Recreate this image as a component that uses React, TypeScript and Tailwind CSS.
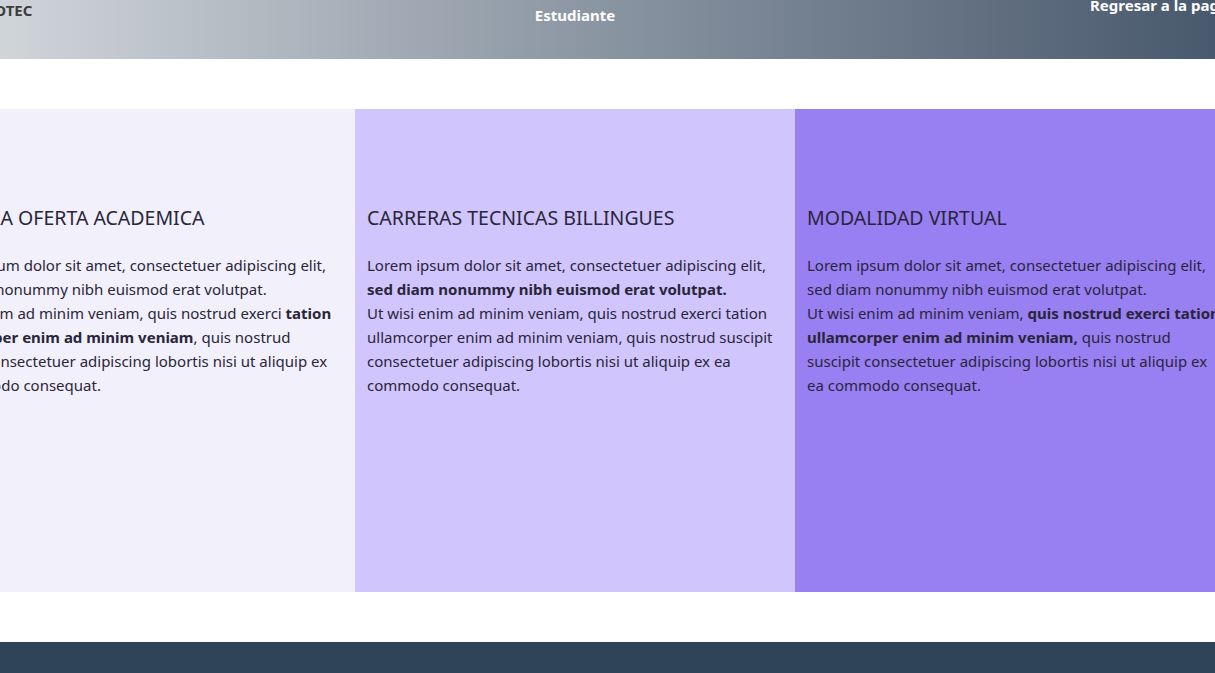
const PANELS = [
	{
		title: "NUESTRA OFERTA ACADEMICA",
		bg: "bg-[#f2f0fb]",
		body: (
			<>
				Lorem ipsum dolor sit amet, consectetuer adipiscing elit, sed diam nonummy nibh euismod erat volutpat.
				<br />
				Ut wisi enim ad minim veniam, quis nostrud exerci <b>tation ullamcorper enim ad minim veniam</b>, quis nostrud suscipit
				consectetuer adipiscing lobortis nisi ut aliquip ex ea commodo consequat.
			</>
		),
	},
	{
		title: "CARRERAS TECNICAS BILLINGUES",
		bg: "bg-[#d0c5fc]",
		body: (
			<>
				Lorem ipsum dolor sit amet, consectetuer adipiscing elit, <b>sed diam nonummy nibh euismod erat volutpat.</b>
				<br />
				Ut wisi enim ad minim veniam, quis nostrud exerci tation ullamcorper enim ad minim veniam, quis nostrud suscipit
				consectetuer adipiscing lobortis nisi ut aliquip ex ea commodo consequat.
			</>
		),
	},
	{
		title: "MODALIDAD VIRTUAL",
		bg: "bg-[#987ff2]",
		body: (
			<>
				Lorem ipsum dolor sit amet, consectetuer adipiscing elit, sed diam nonummy nibh euismod erat volutpat.
				<br />
				Ut wisi enim ad minim veniam, <b>quis nostrud exerci tation ullamcorper enim ad minim veniam,</b> quis nostrud
				suscipit consectetuer adipiscing lobortis nisi ut aliquip ex ea commodo consequat.
			</>
		),
	},
]

const Header = () => (
	<header className="grid h-[59px] grid-cols-3 items-start bg-gradient-to-r from-[#dadee1] to-[#47576b] text-[15px] font-bold">
		<p className="-mt-px pl-[53px] text-[#3d3d3d]">INFOTEC</p>
		<p className="pt-[4px] text-center text-white">Estudiante</p>
		<p className="-mt-[6px] whitespace-nowrap pl-[295px] text-white">Regresar a la pagina principal</p>
	</header>
)

const App = () => {
	return (
		<div className="w-full overflow-hidden bg-white" style={{fontFamily: '"Noto Sans", "Open Sans", sans-serif'}}>
			<div className="-ml-[85px] w-[1320px]">
				<Header />
				<section className="mt-[50px] grid h-[483px] grid-cols-3">
					{PANELS.map(panel => (
						<div key={panel.title} className={`${panel.bg} px-3 pt-[95px] text-[#29263a]`}>
							<h2 className="text-[19.5px] leading-7">{panel.title}</h2>
							<p className="mt-[21px] text-[15px] leading-6">{panel.body}</p>
						</div>
					))}
				</section>
				<footer className="mt-[50px] h-[31px] bg-[#2f4459]" />
			</div>
		</div>
	)
}

export default App
